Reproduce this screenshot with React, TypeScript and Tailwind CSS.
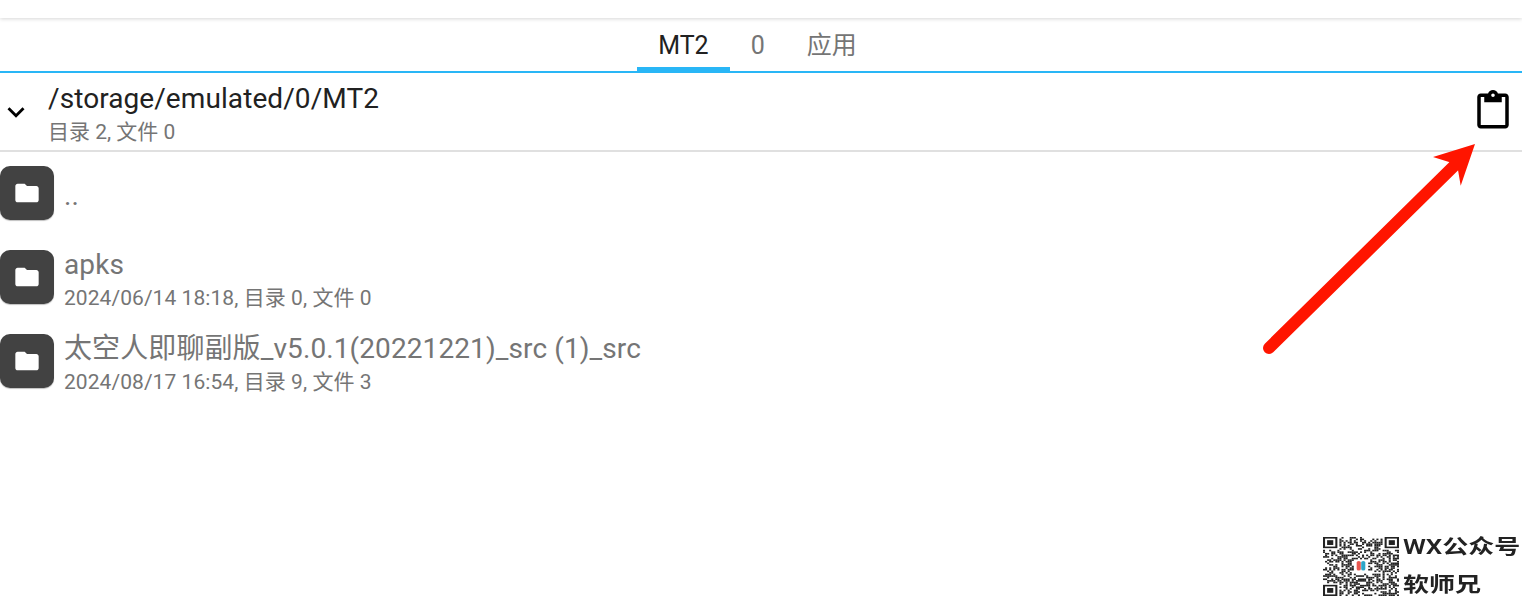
import { Fragment } from "react";

const FONT = "font-['Roboto','Noto_Sans_CJK_SC',sans-serif]";

const FILES = [
  { name: "..", meta: "" },
  { name: "apks", meta: "2024/06/14 18:18, 目录 0, 文件 0" },
  { name: "太空人即聊副版_v5.0.1(20221221)_src (1)_src", meta: "2024/08/17 16:54, 目录 9, 文件 3" },
];

function FolderTile() {
  return (
    <div className="flex h-[54px] w-[54px] shrink-0 items-center justify-center rounded-[10px] bg-[#424242] shadow-[0_1px_1px_rgba(0,0,0,0.25)]">
      <svg width="28" height="28" viewBox="0 0 24 24" fill="#fff">
        <path d="M10 4H4c-1.1 0-2 .9-2 2v12c0 1.1.9 2 2 2h16c1.1 0 2-.9 2-2V8c0-1.1-.9-2-2-2h-8l-2-2z" />
      </svg>
    </div>
  );
}

// watermark QR, modules are just noise apart from the finder squares
function QrCode() {
  const n = 37;
  const cells: [number, number][] = [];
  let seed = 11;
  for (let y = 0; y < n; y++) {
    for (let x = 0; x < n; x++) {
      seed = (seed * 1103515245 + 12345) & 0x7fffffff;
      const inFinder = (x < 8 && y < 8) || (x > n - 9 && y < 8) || (x < 8 && y > n - 9);
      const inLogo = x > 14 && x < 22 && y > 13 && y < 23;
      if (!inFinder && !inLogo && (seed >> 16) % 100 < 52) cells.push([x, y]);
    }
  }
  const finders = [
    [0, 0],
    [n - 7, 0],
    [0, n - 7],
  ];
  return (
    <svg width="76" height="59" viewBox="0 0 37 37" preserveAspectRatio="none" className="blur-[0.5px]">
      {cells.map(([x, y]) => (
        <rect key={`${x}-${y}`} x={x} y={y} width="1" height="1" fill="#222" />
      ))}
      {finders.map(([x, y]) => (
        <Fragment key={`${x}-${y}`}>
          <rect x={x} y={y} width="7" height="7" fill="#222" />
          <rect x={x + 1} y={y + 1} width="5" height="5" fill="#fff" />
          <rect x={x + 2} y={y + 2} width="3" height="3" fill="#222" />
        </Fragment>
      ))}
      <rect x="16.4" y="15" width="2" height="6" rx="1" fill="#e8574f" />
      <rect x="18.6" y="15" width="2" height="6" rx="1" fill="#2ba6c9" />
    </svg>
  );
}

export default function App() {
  return (
    <div className={`relative h-[596px] w-[1522px] overflow-hidden bg-white ${FONT}`}>
      {/* top bar */}
      <div className="relative z-10 h-[18px] bg-white shadow-[0_1px_4px_rgba(0,0,0,0.16)]" />

      {/* tabs */}
      <div className="flex h-[55px] justify-center border-b-2 border-[#29b6f6] pr-[7px]">
        <div className="flex h-[53px] items-center border-b-4 border-[#29b6f6] px-[21px] pt-[6px] text-[25px] text-[#212121]">MT2</div>
        <div className="flex h-[53px] items-center px-[21px] pt-[2px] text-[25px] text-[#757575]">0</div>
        <div className="flex h-[53px] items-center px-[21px] pt-[2px] text-[25px] text-[#757575]">应用</div>
      </div>

      {/* current path */}
      <div className="flex h-[79px] items-center border-b-2 border-[#e0e0e0] pr-[8px]">
        <svg width="34" height="34" viewBox="0 0 24 24" fill="#000" className="-ml-px mt-[1px] shrink-0">
          <path d="M16.59 8.59L12 13.17 7.41 8.59 6 10l6 6 6-6z" />
        </svg>
        <div className="ml-[15px] flex-1 pt-[2px]">
          <div className="text-[28px] leading-[36px] tracking-[0.08px] text-[#212121]">/storage/emulated/0/MT2</div>
          <div className="mt-[2px] text-[21px] leading-[26px] text-[#757575]">目录 2, 文件 0</div>
        </div>
        <svg width="42" height="42" viewBox="0 0 24 24" fill="#000" className="mb-[2px] shrink-0">
          <path d="M19 2h-4.18C14.4.84 13.3 0 12 0c-1.3 0-2.4.84-2.82 2H5c-1.1 0-2 .9-2 2v16c0 1.1.9 2 2 2h14c1.1 0 2-.9 2-2V4c0-1.1-.9-2-2-2zm-7 0c.55 0 1 .45 1 1s-.45 1-1 1-1-.45-1-1 .45-1 1-1zm7 18H5V4h2v3h10V4h2v16z" />
        </svg>
      </div>

      {/* file list */}
      <div className="flex flex-col gap-[30px] pt-[14px]">
        {FILES.map((f) => (
          <div key={f.name} className="flex h-[54px] items-center gap-[10px]">
            <FolderTile />
            <div className={f.meta ? "min-w-0" : "min-w-0 pt-[5px]"}>
              <div className="text-[28px] leading-[41px] tracking-[0.1px] text-[#757575]">{f.name}</div>
              {f.meta && <div className="pt-px text-[21px] leading-[25px] tracking-[0.06px] text-[#757575]">{f.meta}</div>}
            </div>
          </div>
        ))}
      </div>

      {/* red annotation arrow */}
      <svg width="282" height="230" viewBox="0 0 282 230" className="absolute left-[1240px] top-[130px]">
        <path d="M29 218L215 35" stroke="#ff1500" strokeWidth="12" strokeLinecap="round" fill="none" />
        <path d="M235 14L193 27L209 32L218 40L220.7 55.7Z" fill="#ff1500" />
      </svg>

      {/* watermark, squeezed vertically in the source */}
      <div className="absolute left-[1323px] top-[537px] flex gap-[4px]">
        <QrCode />
        <div className="flex flex-col font-semibold text-[#222]">
          <span className="origin-left scale-x-[1.3] whitespace-nowrap text-[20px] leading-[20px]">WX公众号</span>
          <span className="mt-[17px] origin-left scale-x-[1.3] text-[20px] leading-[22px]">软师兄</span>
        </div>
      </div>
    </div>
  );
}
